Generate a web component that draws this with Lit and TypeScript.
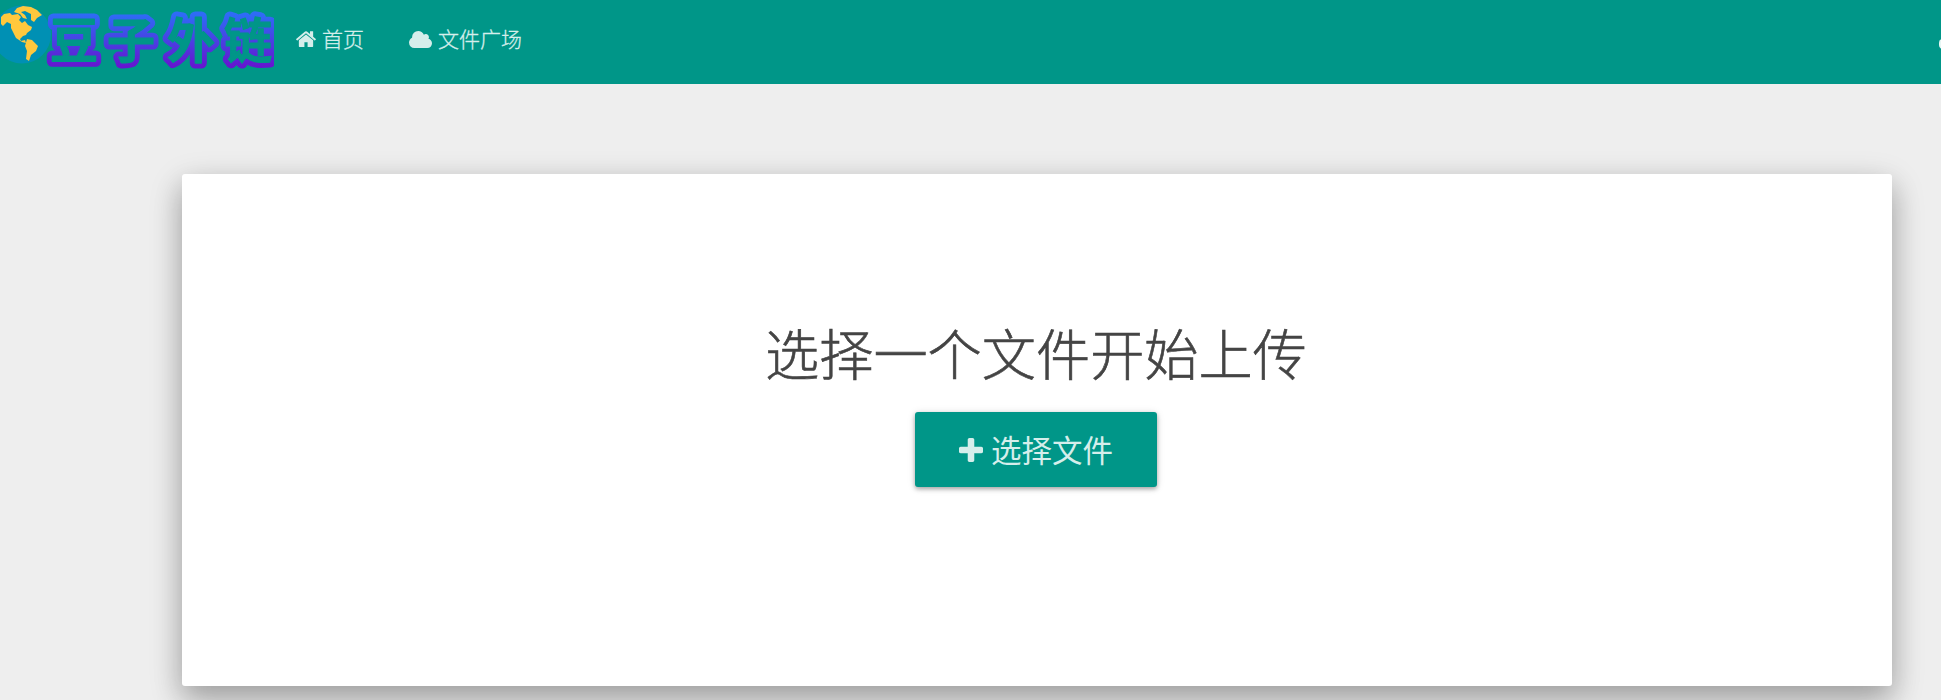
import { LitElement, html, css, svg } from "lit";
import { customElement } from "lit/decorators.js";

const homeIcon = svg`<path d="M1408 992v480q0 26-19 45t-45 19H960v-384H704v384H320q-26 0-45-19t-19-45V992q0-1 .5-3t.5-3l575-474 575 474q1 2 1 6zm223-69l-62 74q-8 9-21 11h-3q-13 0-21-7L832 424l-692 577q-12 8-24 7-13-2-21-11l-62-74q-8-10-7-23.500t11-21.500l719-599q32-26 76-26t76 26l244 204V288q0-14 9-23t23-9h192q14 0 23 9t9 23v408l219 182q10 8 11 21.500t-7 23.500z"/>`;
const cloudIcon = svg`<path d="M1920 1152q0 159-112.500 271.500T1536 1536H448q-185 0-316.500-131.500T0 1088q0-132 71-241.500T258 683q-2-28-2-43 0-212 150-362t362-150q158 0 286.500 88T1242 446q70-62 166-62 106 0 181 75t75 181q0 75-41 138 129 30 213 134.500t84 239.500z"/>`;
const plusIcon = svg`<path d="M1408 736v192q0 40-28 68t-68 28H896v416q0 40-28 68t-68 28H608q-40 0-68-28t-28-68v-416H96q-40 0-68-28t-28-68V736q0-40 28-68t68-28h416V224q0-40 28-68t68-28h192q40 0 68 28t28 68v416h416q40 0 68 28t28 68z"/>`;

@customElement("app-logo")
class AppLogo extends LitElement {
  static styles = css`
    :host { display: block; flex: none; width: 274px; height: 84px; }
    svg { display: block; }
    text { font-family: "Noto Sans CJK SC", sans-serif; font-weight: 700; font-size: 48px; stroke-linejoin: round; stroke-linecap: round; }
    .edge { fill: url(#ink); stroke: url(#ink); stroke-width: 11px; }
    .inner { fill: #009688; stroke: #009688; stroke-width: 1.2px; }
    .word { filter: blur(0.5px); }
  `;
  render() {
    const word = (c: string) => svg`<text class=${c} x="50 107 167 224" y="57.500">豆子外链</text>`;
    return html`<svg width="274" height="84" viewBox="0 0 274 84">
      <defs><linearGradient id="ink" gradientUnits="userSpaceOnUse" x1="0" y1="14" x2="0" y2="67">
        <stop offset="0" stop-color="#2e6cf6"/><stop offset="1" stop-color="#6515cf"/></linearGradient></defs>
      <circle cx="22" cy="34.500" r="29" fill="#0090b4"/>
      <g fill="#ffc83d">
        <path d="M1 17L4 14 10 13 12 15 18 14 21 17 19 20 22 23 25 21 28 25 32 27 31 30 27 33 26 35 23 36 20 39 21 41 25 40 26 43 22 42 16 38 13 32 11 28 11 24 7 22 3 26 1 24Z"/>
        <path d="M14 12L17 8 23 6 31 7 37 10 42 15 37 18 34 22 31 20 31 14 25 11 21 12 25 15 27 19 23 18 20 14Z"/>
        <path d="M27 39L32 40 38 46 36 51 31 55 29 61 26 59 27 51 25 46Z"/>
      </g>
      <g class="word">${word("edge")}${word("inner")}</g>
    </svg>`;
  }
}

@customElement("app-root")
class AppRoot extends LitElement {
  static styles = css`
    :host { display: block; height: 700px; overflow: hidden; background: #eeeeee; font-family: "Noto Sans CJK SC", sans-serif; }
    svg { fill: currentColor; flex: none; display: block; }
    .nav { display: flex; height: 84px; background: #009688; color: #d5eeeb; overflow: hidden; }
    .link { display: flex; align-items: center; height: 78px; font-size: 21px; font-weight: 300; margin-left: 22px; gap: 6px; white-space: nowrap; -webkit-text-stroke: 0.3px currentColor; }
    .link span { line-height: 30px; margin-top: -2px; }
    .link + .link { margin-left: 45px; }
    .account { flex: none; width: 8px; height: 10px; border-radius: 8px; margin: 39px -6px 0 auto; background: #e7f6f4; }
    .panel { box-sizing: border-box; width: 1710px; height: 512px; margin: 90px 0 0 182px; padding-top: 138px; background: #fff; border-radius: 3px;
      display: flex; flex-direction: column; align-items: center;
      box-shadow: 0 14px 29px rgba(0,0,0,.2), 0 10px 34px rgba(0,0,0,.19); }
    h1 { margin: 0 2px 0 0; font-size: 54.200px; line-height: 80px; font-weight: 300; color: #444; -webkit-text-stroke: 0.6px #444; }
    button { border: 0; margin: 20px 2px 0 0; width: 242px; height: 75px; border-radius: 3px; background: #009688; color: #d5eeeb; font: 400 30.5px "Noto Sans CJK SC", sans-serif;
      display: flex; align-items: center; justify-content: center; gap: 8px; padding: 0; box-shadow: 0 2px 4px rgba(0,0,0,.3), 0 1px 8px rgba(0,0,0,.12); }
    button span { margin-top: -1px; }
  `;
  render() {
    return html`
      <nav class="nav">
        <app-logo></app-logo>
        <a class="link"><svg width="20" height="16" viewBox="26 236 1612 1300" preserveAspectRatio="none">${homeIcon}</svg><span>首页</span></a>
        <a class="link"><svg width="23" height="17" viewBox="0 128 1920 1408" preserveAspectRatio="none">${cloudIcon}</svg><span>文件广场</span></a>
        <span class="account"></span>
      </nav>
      <main class="panel">
        <h1>选择一个文件开始上传</h1>
        <button><svg width="24" height="24" viewBox="0 128 1408 1408">${plusIcon}</svg><span>选择文件</span></button>
      </main>`;
  }
}
